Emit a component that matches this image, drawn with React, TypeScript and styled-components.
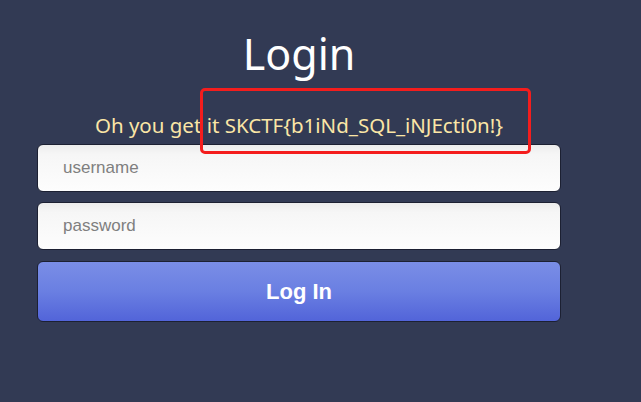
import React from "react";
import styled, { createGlobalStyle } from "styled-components";

const Global = createGlobalStyle`
  html, body { margin: 0; padding: 0; background: #323a54; }
  body { font-family: "Noto Sans", "Open Sans", sans-serif; }
`;

const Page = styled.div`
  position: relative;
  width: 641px;
  height: 402px;
  background: #323a54;
  overflow: hidden;
  padding-left: 37px;
  box-sizing: border-box;
`;

const Form = styled.div`
  width: 524px;
  display: flex;
  flex-direction: column;
  align-items: stretch;
`;

const Title = styled.h1`
  margin: 25px 0 0;
  font-family: "Noto Sans", sans-serif;
  font-weight: 400;
  font-size: 43px;
  line-height: 58px;
  color: #ffffff;
  text-align: center;
`;

const Message = styled.p`
  margin: 29px 0 0;
  font-family: "Noto Sans", sans-serif;
  font-size: 20.5px;
  line-height: 26px;
  color: #fbe6a6;
  text-align: center;
  white-space: nowrap;
`;

const Field = styled.input`
  box-sizing: border-box;
  height: 48px;
  margin-top: ${(p: { $top: number }) => p.$top}px;
  padding: 0 0 0 25px;
  border: 1px solid #1c2032;
  border-radius: 6px;
  background: linear-gradient(to bottom, #ececec 0%, #f6f6f6 20%, #fdfdfd 100%);
  font-family: "Liberation Sans", Arial, sans-serif;
  font-size: 17px;
  color: #333;
  outline: none;
  &::placeholder { color: #7f7f7f; }
`;

const Button = styled.button`
  box-sizing: border-box;
  height: 61px;
  margin-top: 11px;
  border: 1px solid #1c2032;
  border-radius: 6px;
  background: linear-gradient(to bottom, #7a8ee6 0%, #6a7fe2 50%, #5264d9 100%);
  color: #ffffff;
  font-family: "Liberation Sans", Arial, sans-serif;
  font-weight: 700;
  font-size: 22px;
  cursor: pointer;
`;

const Highlight = styled.div`
  position: absolute;
  left: 200px;
  top: 88px;
  width: 331px;
  height: 66px;
  box-sizing: border-box;
  border: 3px solid #f41d1d;
  border-radius: 5px;
  pointer-events: none;
`;

export default function App() {
  return (
    <>
      <Global />
      <Page>
        <Form>
          <Title>Login</Title>
          <Message>Oh you get it SKCTF{"{"}b1iNd_SQL_iNJEcti0n!{"}"}</Message>
          <Field $top={6} placeholder="username" />
          <Field $top={10} type="password" placeholder="password" />
          <Button>Log In</Button>
        </Form>
        <Highlight />
      </Page>
    </>
  );
}
